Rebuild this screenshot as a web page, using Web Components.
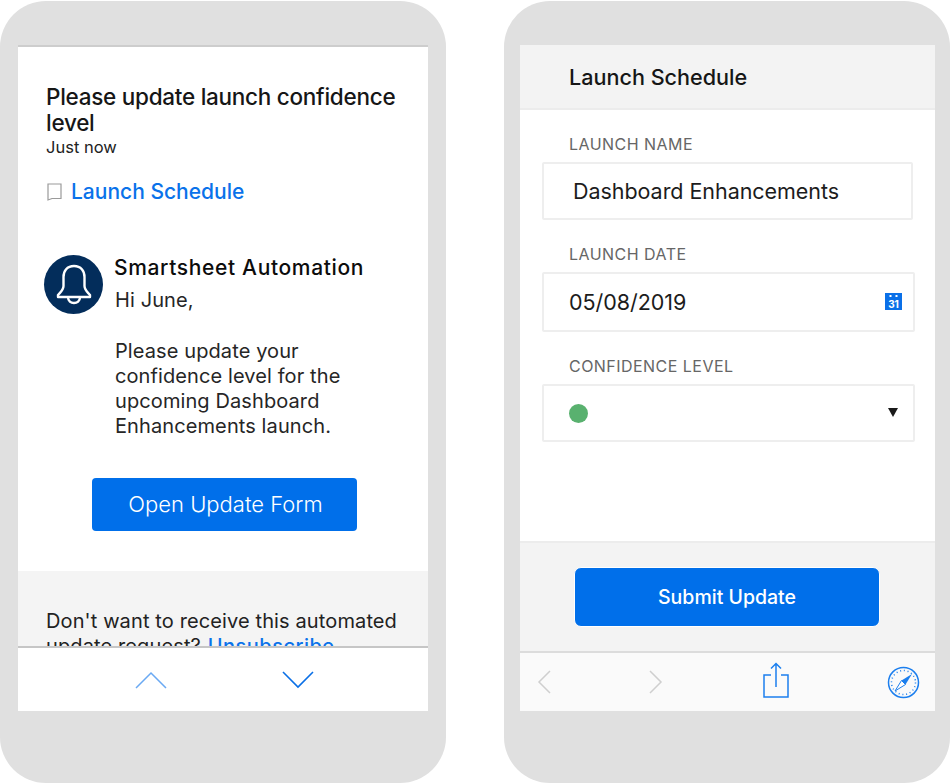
<!DOCTYPE html>
<html>
<head>
<meta charset="utf-8">
<title>Launch Schedule</title>
<style>
  html, body { margin: 0; padding: 0; background: #fff; }
  body { font-family: Inter, "Liberation Sans", sans-serif; color: #161616; }
</style>
</head>
<body>
<phone-pair>
  <phone-frame left="18" right="18">
    <notice-view></notice-view>
  </phone-frame>
  <phone-frame left="16" right="15">
    <update-form></update-form>
  </phone-frame>
</phone-pair>

<script>
  var BLUE = "#006fea";

  class PhonePair extends HTMLElement {
    constructor() {
      super();
      this.attachShadow({ mode: "open" });
      this.shadowRoot.innerHTML = `
<style>
  :host { display: flex; justify-content: space-between; width: 950px; height: 783px; overflow: hidden; }
</style>
<slot></slot>`;
    }
  }
  customElements.define("phone-pair", PhonePair);

  class PhoneFrame extends HTMLElement {
    constructor() {
      super();
      this.attachShadow({ mode: "open" });
      const left = this.getAttribute("left") ?? "18";
      const right = this.getAttribute("right") ?? "18";
      this.shadowRoot.innerHTML = `
<style>
  :host { display: block; box-sizing: border-box; width: 446px; height: 782px; margin-top: 1px; background: #e0e0e0; border-radius: 46px; padding: 44px ${right}px 72px ${left}px; }
  .screen { height: 666px; overflow: hidden; background: #fff; }
</style>
<div class="screen"><slot></slot></div>`;
    }
  }
  customElements.define("phone-frame", PhoneFrame);

  var noticeTemplate = document.createElement("template");
  noticeTemplate.innerHTML = `
<style>
  :host { display: flex; flex-direction: column; height: 666px; }
  .top-line { height: 2px; background: #cdcdcd; flex: none; }
  .scroll { flex: 1; min-height: 0; overflow: hidden; }
  .intro { padding: 37px 28px 0; }
  h1 { margin: 0; font-size: 22.5px; line-height: 26px; font-weight: 500; letter-spacing: -0.27px; color: #161616; }
  .time { font-size: 16.5px; line-height: 20px; margin-top: 1px; color: #222; }
  .sheet { display: flex; align-items: center; gap: 9px; margin-top: 22px; color: #0a72ea; font-size: 21px; line-height: 26px; font-weight: 500; }
  .sheet svg { display: block; margin-left: 1px; }
  .message { display: flex; gap: 11px; padding: 0 26px; margin-top: 50px; }
  .avatar { flex: none; width: 59px; height: 59px; border-radius: 50%; background: #032d5b; display: flex; align-items: center; justify-content: center; }
  .from { font-size: 21px; line-height: 26px; font-weight: 500; letter-spacing: 0.65px; color: #0c0c0c; }
  .body { font-size: 20px; line-height: 25px; letter-spacing: 0.1px; color: #262626; margin-top: 7px; padding-left: 1px; }
  .body p { margin: 0 0 26px; }
  .cta { display: block; box-sizing: border-box; width: 265px; height: 53px; margin: 13px 0 0 74px; padding-left: 2px; border-radius: 4px; background: ${BLUE}; color: #fff; font-size: 22px; line-height: 53px; text-align: center; font-weight: 300; }
  .legal { margin-top: 40px; height: 120px; background: #f4f4f4; padding: 38px 28px 0; font-size: 20px; line-height: 25px; letter-spacing: 0.12px; color: #222; }
  .legal a { color: #0a72ea; font-weight: 500; letter-spacing: 0.5px; margin-left: 1px; text-decoration: none; }
  .toolbar { flex: none; height: 63px; border-top: 2px solid #c6c6c6; display: flex; background: #fff; }
  .toolbar svg { display: block; position: relative; }
  .toolbar div { display: flex; align-items: center; justify-content: center; height: 64px; }
</style>
<div class="top-line"></div>
<div class="scroll">
  <div class="intro">
    <h1>Please update launch confidence level</h1>
    <div class="time">Just now</div>
    <div class="sheet">
      <svg width="15" height="18" viewBox="0 0 15 18" fill="none"><path d="M1 1h13v14.500L5 15.500 1 17z" stroke="#9a9a9a" stroke-width="1.200"/></svg>
      <span>Launch Schedule</span>
    </div>
  </div>
  <div class="message">
    <div class="avatar">
      <svg width="36" height="42" viewBox="0 0 36 42" fill="none" stroke="#fff" stroke-width="2.400" stroke-linejoin="round"><path d="M18 2c-7 0-10.500 5-10.500 11v9c0 4-3 6-5.500 9v2h32v-2c-2.500-3-5.500-5-5.500-9v-9C28.500 7 25 2 18 2z"/><path d="M12 33c0 4 3 6 6 6s6-2 6-6"/></svg>
    </div>
    <div>
      <div class="from">Smartsheet Automation</div>
      <div class="body">
        <p>Hi June,</p>
        <p>Please update your<br>confidence level for the<br>upcoming Dashboard<br>Enhancements launch.</p>
      </div>
    </div>
  </div>
  <div class="cta">Open Update Form</div>
  <div class="legal">Don't want to receive this automated update request? <a>Unsubscribe</a></div>
</div>
<div class="toolbar">
  <div style="width:266px">
    <svg width="32" height="18" viewBox="0 0 32 18" fill="none" stroke="#6aa9f3" stroke-width="1.500"><path d="M1 17 16 2l15 15"/></svg>
  </div>
  <div style="width:32px;margin-left:-2px">
    <svg width="32" height="18" viewBox="0 0 32 18" fill="none" stroke="#0a6fe6" stroke-width="1.600"><path d="M1 1l15 15L31 1"/></svg>
  </div>
</div>`;

  class NoticeView extends HTMLElement {
    constructor() {
      super();
      this.attachShadow({ mode: "open" });
    }
    connectedCallback() {
      this.shadowRoot.appendChild(noticeTemplate.content.cloneNode(true));
    }
  }
  customElements.define("notice-view", NoticeView);

  var fieldTemplate = document.createElement("template");
  fieldTemplate.innerHTML = `
<style>
  :host { display: block; }
  label { display: block; padding-left: 27px; font-size: 16px; line-height: 20px; letter-spacing: 0.46px; color: #666; margin-bottom: 8px; }
  .box { box-sizing: border-box; display: flex; align-items: center; justify-content: space-between; height: var(--box-height, 60px); width: var(--box-width, 373px); border: 2px solid #eee; border-radius: 2px; padding: 0 12px 0 var(--box-left, 25px); font-size: 21.5px; letter-spacing: -0.05px; color: #1c1c1c; }
</style>
<label></label>
<div class="box"><slot></slot><slot name="end"></slot></div>`;

  class FormField extends HTMLElement {
    constructor() {
      super();
      this.attachShadow({ mode: "open" });
      this.shadowRoot.appendChild(fieldTemplate.content.cloneNode(true));
      this.shadowRoot.querySelector("label").textContent = this.getAttribute("label") ?? "";
    }
  }
  customElements.define("form-field", FormField);

  var formTemplate = document.createElement("template");
  formTemplate.innerHTML = `
<style>
  :host { display: flex; flex-direction: column; height: 666px; background: #fff; }
  header { flex: none; box-sizing: border-box; height: 65px; background: #f3f3f3; border-bottom: 2px solid #ececec; padding: 0 49px; font-size: 21.6px; line-height: 64px; font-weight: 500; color: #161616; }
  .fields { flex: 1; min-height: 0; padding: 24px 0 0 22px; display: flex; flex-direction: column; gap: 24px; }
  .dot { width: 19px; height: 19px; border-radius: 50%; background: #59b16f; display: block; }
  .caret { width: 0; height: 0; border-left: 5.5px solid transparent; border-right: 5.5px solid transparent; border-top: 9px solid #1a1a1a; display: block; margin-right: 3px; margin-top: -2px; }
  .cal { display: block; margin-right: -1px; margin-top: -1px; }
  .submit-bar { flex: none; box-sizing: border-box; height: 110px; background: #f3f3f3; border-top: 2px solid #ececec; padding: 24px 0 0 54px; }
  .submit { box-sizing: border-box; width: 306px; height: 60px; background: ${BLUE}; border: 1px solid #fff; border-radius: 7px; color: #fff; font-size: 19.5px; line-height: 58px; font-weight: 500; text-align: center; }
  .toolbar { flex: none; box-sizing: border-box; height: 60px; background: #fafafa; border-top: 2px solid #dcdcdc; display: flex; align-items: center; padding-left: 17px; }
  .toolbar svg { display: block; flex: none; }
  .cal text { font-family: Inter, "Liberation Sans", sans-serif; font-size: 10px; font-weight: 700; fill: #fff; }
</style>
<header>Launch Schedule</header>
<div class="fields">
  <form-field label="LAUNCH NAME" style="--box-height:58px;--box-width:371px;--box-left:29px;">Dashboard Enhancements</form-field>
  <form-field label="LAUNCH DATE">05/08/2019
    <svg class="cal" slot="end" width="17" height="17" viewBox="0 0 17 17"><rect width="17" height="17" fill="#0a70e8"/><rect x="4.500" y="2" width="2" height="2" fill="#fff"/><rect x="10.500" y="2" width="2" height="2" fill="#fff"/><text x="8.500" y="15" text-anchor="middle">31</text></svg>
  </form-field>
  <form-field label="CONFIDENCE LEVEL" style="--box-height:58px;">
    <span class="dot"></span>
    <span class="caret" slot="end"></span>
  </form-field>
</div>
<div class="submit-bar"><div class="submit">Submit Update</div></div>
<div class="toolbar">
  <svg width="14" height="24" viewBox="0 0 14 24" fill="none" stroke="#cfcfcf" stroke-width="1.500"><path d="M13 1 2 12l11 11"/></svg>
  <svg style="margin-left:98px" width="14" height="24" viewBox="0 0 14 24" fill="none" stroke="#cfcfcf" stroke-width="1.500"><path d="m1 1 11 11L1 23"/></svg>
  <svg style="margin-left:99px;margin-top:-4px" width="28" height="37" viewBox="0 0 28 37" fill="none" stroke="#1c7fee" stroke-width="1.500"><path d="M9 13H2v22h24V13h-7"/><path d="M14 25V2M9 6.500 14 1.500l5 5"/></svg>
  <svg style="margin-left:97px" width="33" height="33" viewBox="0 0 33 33" fill="none" stroke="#1c7fee"><circle cx="16.500" cy="16.500" r="15" stroke-width="1.500"/><circle cx="16.500" cy="16.500" r="12" stroke-width="1.500" stroke-dasharray="1 2.770"/><path d="M25 8 14.500 14.500 18.500 18.500z" fill="#1c7fee" stroke="none"/><path d="M8 25 14.500 14.500 18.500 18.500z" fill="#fff" stroke-width="1"/></svg>
</div>`;

  class UpdateForm extends HTMLElement {
    constructor() {
      super();
      this.attachShadow({ mode: "open" });
    }
    connectedCallback() {
      this.shadowRoot.appendChild(formTemplate.content.cloneNode(true));
    }
  }
  customElements.define("update-form", UpdateForm);
</script>
</body>
</html>
